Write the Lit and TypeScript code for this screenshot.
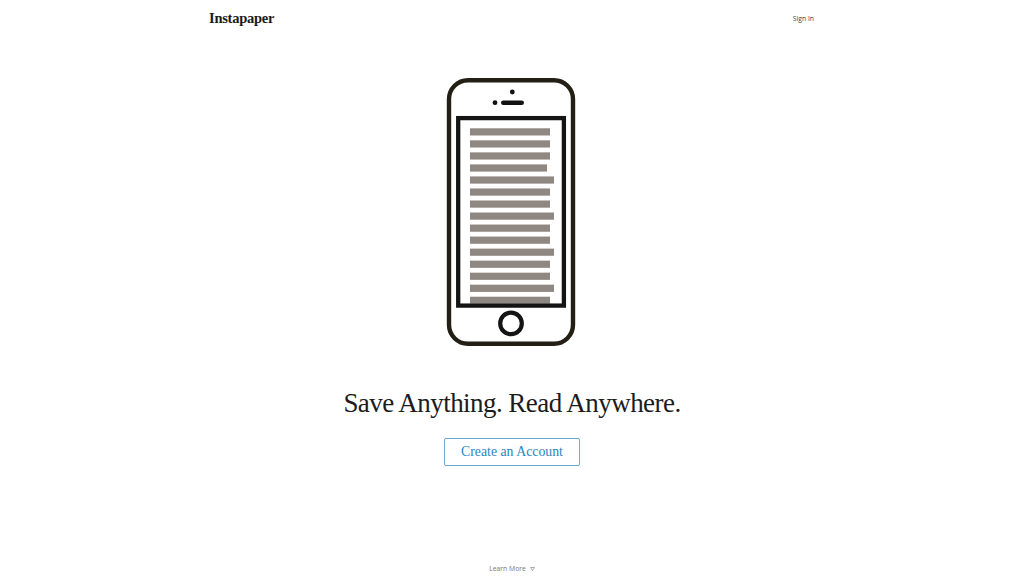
import { LitElement, html, css, svg } from "lit";
import { customElement } from "lit/decorators.js";

const BAR_ENDS = [550, 550, 550, 547, 554, 550, 550, 554, 550, 550, 554, 550, 550, 554, 550];

@customElement("app-root")
export class AppRoot extends LitElement {
  static styles = css`
    :host {
      display: flex;
      flex-direction: column;
      align-items: center;
      width: 1024px;
      height: 576px;
      overflow: hidden;
      background: #fff;
      color: #1a1a1a;
    }
    .top {
      box-sizing: border-box;
      width: 605px;
      height: 36px;
      margin-left: -1px;
      display: flex;
      align-items: center;
      justify-content: space-between;
    }
    .logo {
      font: 700 14.5px/1 "Liberation Serif", serif;
      color: #1a1a1a;
      letter-spacing: -0.26px;
    }
    .signin {
      font: 400 6.8px/1 "Open Sans", sans-serif;
      color: #444;
      padding-top: 2px;
    }
    .phone {
      display: block;
      margin-top: 41px;
      margin-left: -2px;
      filter: blur(0.25px);
    }
    h1 {
      margin: 40px 0 0;
      font: 400 27px/32px "Liberation Serif", serif;
      letter-spacing: -0.55px;
      color: #1c1c1c;
    }
    .cta {
      box-sizing: border-box;
      margin-top: 19px;
      width: 136px;
      height: 28px;
      display: flex;
      align-items: center;
      justify-content: center;
      border: 1px solid #6aa9cc;
      border-radius: 2px;
      font: 400 13.8px/1 "Liberation Serif", serif;
      color: #2a86bc;
    }
    .more {
      margin-top: auto;
      height: 12px;
      display: flex;
      align-items: flex-start;
      gap: 4px;
      font: 400 6.8px/9px "Open Sans", sans-serif;
      color: #777;
    }
    .more svg {
      display: block;
      margin-top: 3px;
    }
  `;

  render() {
    return html`
      <div class="top">
        <span class="logo">Instapaper</span>
        <span class="signin">Sign In</span>
      </div>
      <svg class="phone" width="130" height="270" viewBox="446 77 130 270" aria-hidden="true">
        <rect x="449" y="80.2" width="124" height="263.6" rx="19" fill="#fff" stroke="#231f14" stroke-width="4.4" />
        <circle cx="512.3" cy="92" r="2.4" fill="#111" />
        <circle cx="495" cy="102.7" r="2.4" fill="#111" />
        <rect x="501" y="100.4" width="23" height="4.6" rx="2.3" fill="#111" />
        ${BAR_ENDS.map(
          (end, i) => svg`<rect x="470" y=${128.3 + i * 12.03} width=${end - 470} height=${i === 14 ? 7 : 7.2} fill="#8f8782" />`
        )}
        <rect x="458.2" y="118.1" width="105.7" height="187.5" fill="none" stroke="#141414" stroke-width="4.3" />
        <circle cx="511" cy="323.4" r="10.8" fill="#fff" stroke="#141414" stroke-width="4.2" />
      </svg>
      <h1>Save Anything. Read Anywhere.</h1>
      <div class="cta">Create an Account</div>
      <div class="more">
        <span>Learn More</span>
        <svg width="5" height="4" viewBox="0 0 5 4" aria-hidden="true">
          <path d="M0.5 0.5H4.5L2.5 3.5Z" fill="none" stroke="#888" stroke-width="0.7" />
        </svg>
      </div>
    `;
  }
}
